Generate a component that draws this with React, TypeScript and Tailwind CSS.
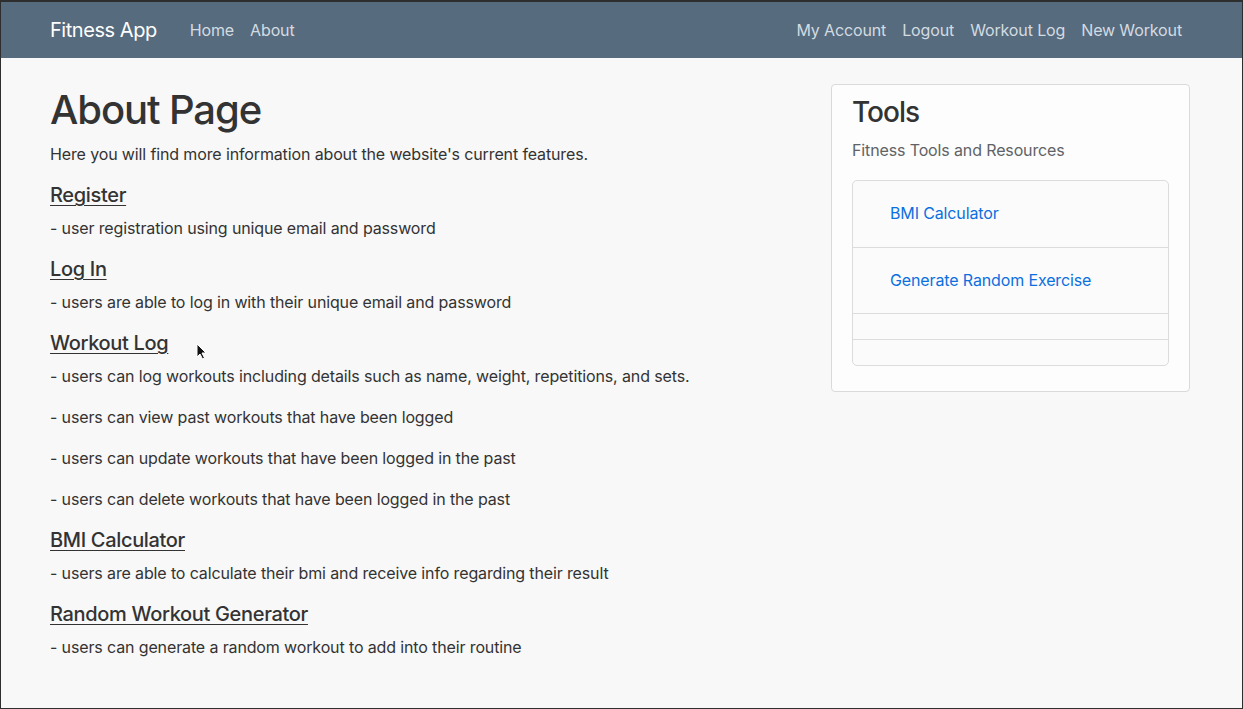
const features = [
  { title: "Register", items: ["- user registration using unique email and password"] },
  { title: "Log In", items: ["- users are able to log in with their unique email and password"] },
  {
    title: "Workout Log",
    items: [
      "- users can log workouts including details such as name, weight, repetitions, and sets.",
      "- users can view past workouts that have been logged",
      "- users can update workouts that have been logged in the past",
      "- users can delete workouts that have been logged in the past",
    ],
  },
  { title: "BMI Calculator", items: ["- users are able to calculate their bmi and receive info regarding their result"] },
  { title: "Random Workout Generator", items: ["- users can generate a random workout to add into their routine"] },
];

const tools = ["BMI Calculator", "Generate Random Exercise", "", ""];

const Cursor = () => (
  <svg className="absolute left-[195px] top-[341px]" width="11" height="17" viewBox="0 0 11 17">
    <path d="M1 1 L1 14 L4 11 L6.5 16 L8.5 15 L6 10 L10 10 Z" fill="#111" stroke="#fff" strokeWidth="1" />
  </svg>
);

export default function App() {
  return (
    <div
      className="relative w-[1243px] h-[709px] overflow-hidden border border-[#2e2e2e] border-t-2 bg-[#f8f8f8] text-[#333]"
      style={{ fontFamily: "Inter, 'Liberation Sans', sans-serif" }}
    >
      <nav className="h-[56px] bg-[#566b7d]">
        <div className="w-[1140px] ml-[49px] h-full flex items-center justify-between">
          <div className="flex items-center">
            <span className="text-white text-[20px] tracking-[-0.45px] mr-[25px]">Fitness App</span>
            <a className="px-2 text-[16px] tracking-[-0.13px] text-[#d3dbe2]">Home</a>
            <a className="px-2 text-[16px] tracking-[-0.13px] text-[#d3dbe2]">About</a>
          </div>
          <div className="flex items-center">
            {["My Account", "Logout", "Workout Log", "New Workout"].map((l) => (
              <a key={l} className="px-2 text-[16px] tracking-[-0.13px] text-[#d3dbe2]">
                {l}
              </a>
            ))}
          </div>
        </div>
      </nav>

      <main className="w-[1140px] ml-[49px] pt-[26px] flex gap-[21px] tracking-[-0.13px]">
        <div className="flex-1">
          <h1 className="mt-[2px] mb-2 text-[40px] leading-[48px] tracking-[-1.1px] font-medium text-[#333]">
            About Page
          </h1>
          <p className="text-[16px] leading-[25px] mb-4">
            Here you will find more information about the website's current features.
          </p>
          {features.map((f) => (
            <div key={f.title}>
              <h5 className="text-[20px] leading-[25px] tracking-[-0.33px] font-medium underline underline-offset-[3px] decoration-1 mb-2">
                {f.title}
              </h5>
              {f.items.map((t) => (
                <p key={t} className="text-[16px] leading-[25px] mb-4">
                  {t}
                </p>
              ))}
            </div>
          ))}
        </div>

        <aside className="w-[359px] h-[308px] bg-[#fdfdfd] border border-[#dadada] rounded-[4px] px-5 pt-[10px]">
          <h3 className="text-[28px] leading-[34px] tracking-[-1px] font-medium mb-[9px] text-[#333]">Tools</h3>
          <p className="text-[16px] leading-[24px] text-[#606366] mb-[18px]">Fitness Tools and Resources</p>
          <ul className="border border-[#dcdcdc] rounded-[5px] bg-[#fbfbfb]">
            {tools.map((t, i) => (
              <li
                key={i}
                className={`px-5 ${i > 0 ? "border-t border-[#dcdcdc]" : ""} ${t ? "h-[66px] pt-[12px]" : "h-[26px]"}`}
              >
                {t && <a className="block px-[17px] py-2 leading-[24px] text-[16px] text-[#0b6fe0]">{t}</a>}
              </li>
            ))}
          </ul>
        </aside>
      </main>
      <Cursor />
    </div>
  );
}
